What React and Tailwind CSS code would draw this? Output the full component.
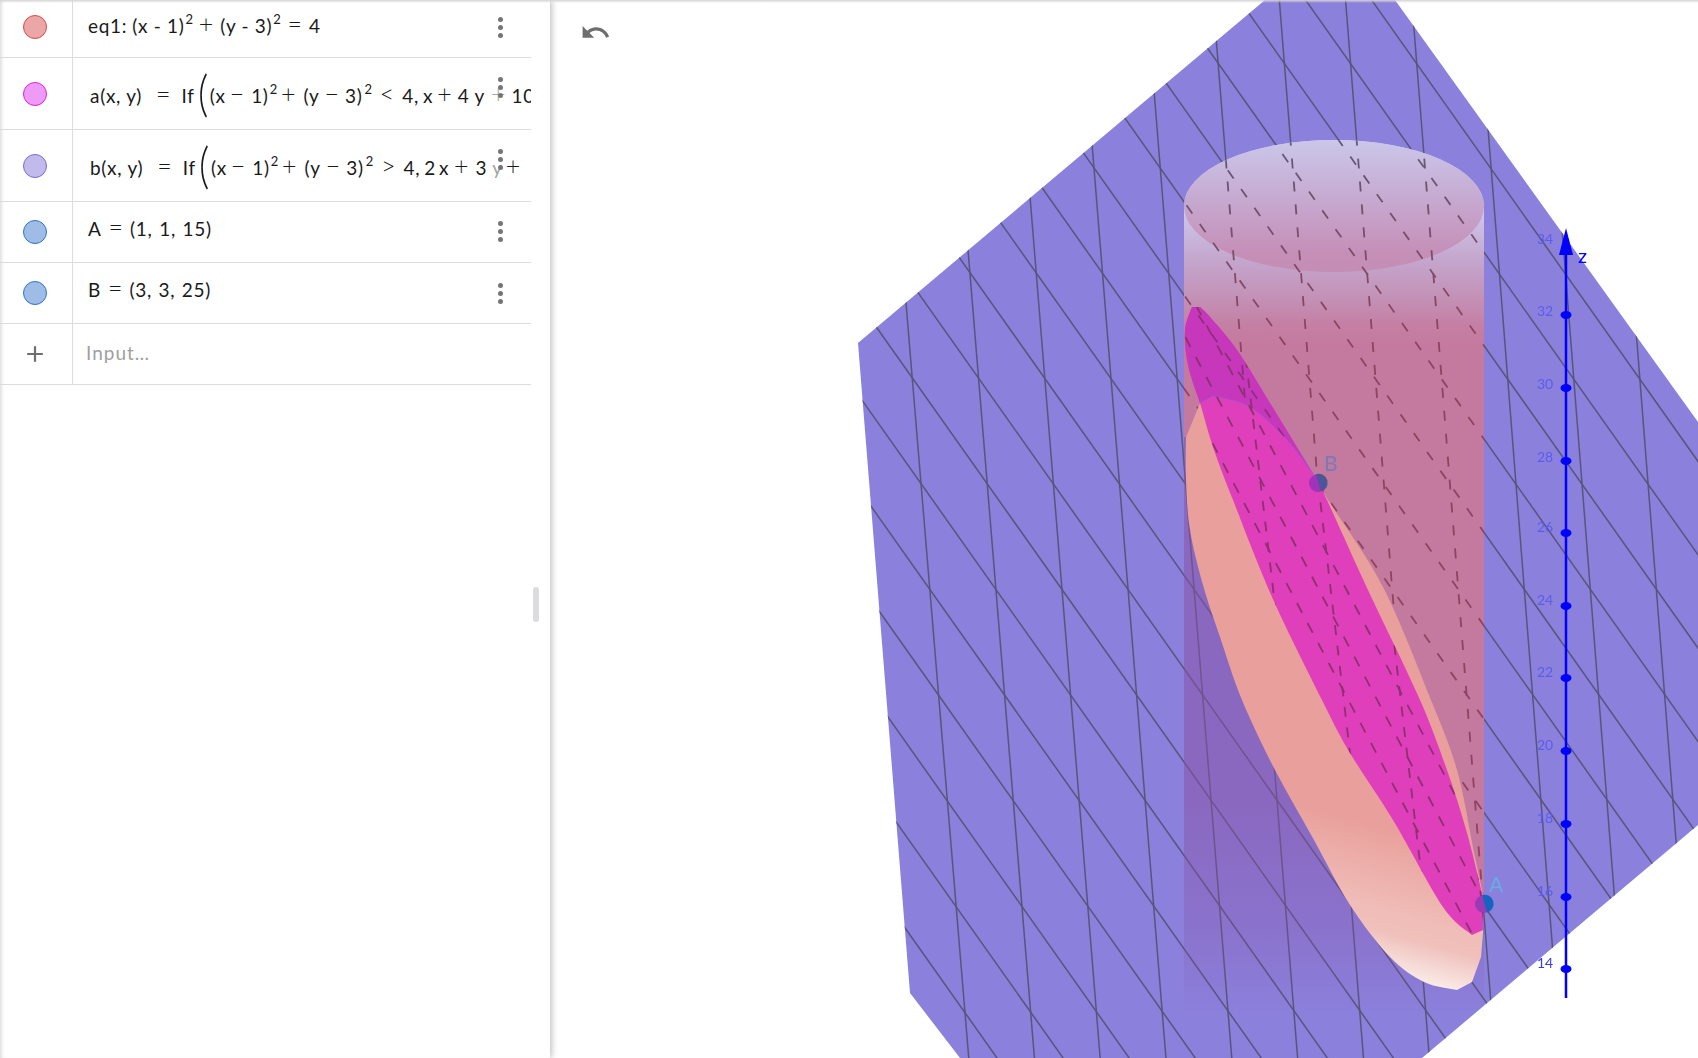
import React from "react";
import { Plus } from "lucide-react";

// plane grid, two families of parallel lines
const f1 = [];
for (let k = -6; k < 14; k++) {
  const px = 906 + 62.1 * k, py = 303 - 52 * k, qx = 939 + 66 * k;
  const s = (qx - px) / (700 - py);
  f1.push([px + s * (-300 - py), -300, px + s * (1100 - py), 1100]);
}
const f2 = [];
for (let j = -26; j < 34; j++) {
  const sx = 877 + 41.3 * j, sy = 328 - 35 * j;
  f2.push([sx - 1054, sy - 1490, sx + 1054, sy + 1490]);
}
const planeGrid = [...f1, ...f2];

// grid of the magenta surface: dash centre, slope dx/dy, dash period
const dashedFrom = (cx, cy, slope, period, dash) => {
  const len = Math.hypot(slope, 1);
  const ux = slope / len, uy = 1 / len;
  const back = period * 30 + dash / 2;
  return [cx - ux * back, cy - uy * back, cx + ux * 700, cy + uy * 700];
};
const f3 = [
  [1218, 508], [1246.7, 508], [1272.3, 501.7], [1304.3, 510],
].map(([x, y]) => dashedFrom(x, y, 0.529, 22.6, 11));
const f4 = [
  [1263.3, 506], [1321, 507.3], [1378, 507], [1435, 507],
].map(([x, y]) => dashedFrom(x, y, 0.118, 20.6, 10));

const ticks = [
  [14, 969], [16, 897], [18, 824], [20, 751], [22, 678], [24, 606],
  [26, 533], [28, 461], [30, 388], [32, 315],
];

// catmull-rom through the points, first point is the current position
const smooth = (p) => {
  let d = "";
  for (let i = 0; i < p.length - 1; i++) {
    const a = p[i - 1] || p[i], b = p[i], c = p[i + 1], e = p[i + 2] || c;
    d += ` C${b[0] + (c[0] - a[0]) / 6} ${b[1] + (c[1] - a[1]) / 6} ${c[0] - (e[0] - b[0]) / 6} ${c[1] - (e[1] - b[1]) / 6} ${c[0]} ${c[1]}`;
  }
  return d;
};

const planePts = "858,343 1265,0 1395,0 1698,422 1698,825 1422,1058 960,1058 910,993";

const pinkPath = "M1184 206 A150 66 0 0 1 1484 206 L1484 905 L1473 847 L1431 700 L1318 483 L1200 403 L1186 437 L1184 437 Z";

const salmonPath =
  "M1186 437 L1200 403 L1213 396 L1318 483" +
  smooth([[1318, 483], [1330, 503], [1383, 587], [1431, 700], [1457, 770], [1473, 847], [1483, 895]]) +
  " L1483 933 L1481 957 L1472 982 L1457 990" +
  smooth([[1457, 990], [1424, 982], [1390, 957], [1350, 905], [1314, 840], [1275, 770], [1242, 700], [1220, 637], [1203, 585], [1190, 530], [1186, 480], [1186, 437]]) +
  " Z";

const magentaPath =
  "M1192 307" +
  smooth([[1192, 307], [1185, 330], [1188, 365], [1200, 403], [1213, 447], [1233, 500], [1272, 597], [1322, 700], [1350, 753], [1393, 820], [1443, 907], [1472, 935]]) +
  " L1483 930 L1483 897" +
  smooth([[1483, 897], [1467, 833], [1448, 773], [1420, 700], [1368, 590], [1327, 500], [1318, 483], [1270, 403], [1237, 350], [1210, 317], [1200, 307]]) +
  " Z";

const magentaDark =
  "M1192 307" +
  smooth([[1192, 307], [1185, 330], [1188, 365], [1200, 403]]) +
  " L1213 396" +
  smooth([[1213, 396], [1250, 407], [1287, 440], [1316, 478]]) +
  smooth([[1316, 478], [1270, 403], [1237, 350], [1210, 317], [1200, 307]]) +
  " Z";

const Lines = ({ data }) =>
  data.map((l, i) => <line key={i} x1={l[0]} y1={l[1]} x2={l[2]} y2={l[3]} />);

function Graph() {
  return (
    <svg viewBox="550 0 1148 1058" className="block w-[1148px] h-[1058px] blur-[0.4px]">
      <defs>
        <clipPath id="plane"><polygon points={planePts} /></clipPath>
        <clipPath id="pink"><path d={pinkPath} /></clipPath>
        <clipPath id="magenta"><path d={magentaPath} /></clipPath>
        <clipPath id="magentaDark"><path d={magentaDark} /></clipPath>
        <linearGradient id="body" gradientUnits="userSpaceOnUse" x1="0" y1="206" x2="0" y2="345">
          <stop offset="0" stopColor="#cfcaee" />
          <stop offset="0.4" stopColor="#c4a5cc" />
          <stop offset="0.68" stopColor="#c48fb4" />
          <stop offset="0.85" stopColor="#c480a4" />
          <stop offset="1" stopColor="#c47a9e" />
        </linearGradient>
        <linearGradient id="disc" gradientUnits="userSpaceOnUse" x1="0" y1="140" x2="0" y2="272">
          <stop offset="0" stopColor="#cbc7ea" />
          <stop offset="0.45" stopColor="#c6a9d0" />
          <stop offset="0.85" stopColor="#c58fb8" />
          <stop offset="1" stopColor="#c48db5" />
        </linearGradient>
        <linearGradient id="dash" gradientUnits="userSpaceOnUse" x1="0" y1="140" x2="0" y2="340">
          <stop offset="0" stopColor="#55506a" />
          <stop offset="1" stopColor="#8a3c5a" />
        </linearGradient>
        <linearGradient id="shade" gradientUnits="userSpaceOnUse" x1="0" y1="800" x2="0" y2="1015">
          <stop offset="0" stopColor="#8950a4" stopOpacity="0.5" />
          <stop offset="0.6" stopColor="#8950a4" stopOpacity="0.28" />
          <stop offset="1" stopColor="#8950a4" stopOpacity="0" />
        </linearGradient>
        <linearGradient id="salmon" gradientUnits="userSpaceOnUse" x1="1400" y1="830" x2="1360" y2="975">
          <stop offset="0" stopColor="#e99f9b" />
          <stop offset="0.55" stopColor="#f0bdb8" />
          <stop offset="0.68" stopColor="#f0c0bb" />
          <stop offset="0.92" stopColor="#f9e8e4" />
        </linearGradient>
      </defs>

      {/* plane with its grid */}
      <polygon points={planePts} fill="#8b80dc" />
      <g clipPath="url(#plane)" stroke="#57557a" strokeWidth="1.5">
        <Lines data={planeGrid} />
      </g>

      {/* cylinder */}
      <rect x="1184" y="300" width="300" height="715" fill="url(#shade)" />
      <path d={pinkPath} fill="url(#body)" />
      <ellipse cx="1334" cy="206" rx="150" ry="66" fill="url(#disc)" />
      <g clipPath="url(#pink)" stroke="url(#dash)" strokeWidth="1.8" strokeDasharray="10 13" opacity="0.9">
        <Lines data={planeGrid} />
      </g>

      {/* surfaces */}
      <path d={salmonPath} fill="url(#salmon)" />
      <path d={magentaPath} fill="#e03fbb" />
      <path d={magentaDark} fill="#c637bc" />
      <path d={"M1200 403 L1213 396" + smooth([[1213, 396], [1250, 407], [1287, 440], [1316, 478]])} fill="none" stroke="#9a5ad0" strokeWidth="1" opacity="0.7" />
      <g clipPath="url(#magentaDark)" stroke="#8f2f7c" strokeWidth="1.8" strokeDasharray="10 13">
        <Lines data={planeGrid} />
      </g>
      <g clipPath="url(#magenta)" stroke="#8f3070" strokeWidth="1.8">
        <g strokeDasharray="11 11.6"><Lines data={f3} /></g>
        <g strokeDasharray="10 10.6"><Lines data={f4} /></g>
      </g>

      {/* points */}
      <circle cx="1318" cy="483" r="9" fill="#a033b8" />
      <path d="M1316 474 A9 9 0 1 1 1321 491.5 Z" fill="#4a5698" />
      <circle cx="1484" cy="904" r="9" fill="#9a3ab5" />
      <path d="M1482 895 A9 9 0 1 1 1487 912.5 Z" fill="#1565c0" />
      <text x="1324" y="471" fontSize="21" fill="#7a7ab4" fontFamily="Lato, sans-serif">B</text>
      <text x="1489" y="892" fontSize="21" fill="#66ace6" fontFamily="Lato, sans-serif">A</text>

      {/* z axis */}
      <line x1="1566" y1="250" x2="1566" y2="998" stroke="#0000ff" strokeWidth="2.5" />
      <path d="M1566 228 L1573 255 L1559 255 Z" fill="#0000ff" />
      {ticks.map(([n, y]) => (
        <g key={n}>
          <ellipse cx="1566" cy={y} rx="5.5" ry="4" fill="#0000ff" />
          <text x="1545" y={n >= 28 ? y + 1 : y - 1} textAnchor="middle" fontSize="14" fill={n === 14 ? "#3a3af0" : "#5a5cf0"} fontFamily="Lato, sans-serif">{n}</text>
        </g>
      ))}
      <text x="1545" y="244" textAnchor="middle" fontSize="14" fill="#5a5cf0" fontFamily="Lato, sans-serif">34</text>
      <text x="1578" y="263" fontSize="20" fill="#0000ff" fontFamily="Lato, sans-serif">z</text>
    </svg>
  );
}

function Dots({ className }) {
  return (
    <div className={`absolute left-[498px] flex flex-col gap-[3px] ${className}`}>
      <span className="w-[5px] h-[5px] rounded-full bg-[#757575]" />
      <span className="w-[5px] h-[5px] rounded-full bg-[#757575]" />
      <span className="w-[5px] h-[5px] rounded-full bg-[#757575]" />
    </div>
  );
}

function Row({ height, marker, children, textClass = "", markerClass = "" }) {
  return (
    <div className={`flex border-b border-[#dcdcdc] ${height}`}>
      <div className={`w-[73px] shrink-0 border-r border-[#dcdcdc] flex items-center justify-center pr-[3px] ${markerClass}`}>
        {marker}
      </div>
      <div className={`flex-1 min-w-0 flex items-center overflow-hidden whitespace-nowrap ${textClass}`}>
        <div className="flex items-baseline">{children}</div>
      </div>
    </div>
  );
}

const Dot = ({ className }) => (
  <span className={`w-6 h-6 rounded-full border ${className}`} />
);

const Two = ({ className = "" }) => (
  <span className={`text-[13px] relative -top-[9px] ${className}`}>2</span>
);

// math operators are wider than the text font's
const Op = ({ className = "", children }) => (
  <span className={`text-[25px] leading-none font-light tracking-normal ${className}`}>{children}</span>
);

const BigParen = () => (
  <span className="w-[12px] ml-[3px] inline-block text-[50px] leading-none font-light tracking-normal relative top-[8px] origin-left scale-x-[0.8]">(</span>
);

const IfHead = ({ name }) => (
  <>
    <span>{name}(x, y)</span>
    <Op className="ml-[14px]">=</Op>
    <span className="ml-[11px]">If</span>
    <BigParen />
    <span>(x</span>
    <Op className="ml-[4px]">−</Op>
    <span className="ml-[7px]">1)</span>
    <Two className="ml-[1px]" />
    <Op className="ml-[3px]">+</Op>
    <span className="ml-[8px]">(y</span>
    <Op className="ml-[5px]">−</Op>
    <span className="ml-[6px]">3)</span>
    <Two className="ml-[2px]" />
  </>
);

export default function App() {
  return (
    <div className="relative flex h-[1058px] w-[1698px] overflow-hidden bg-white font-['Lato',sans-serif] text-[#1a1a1a]">
      <aside className="relative z-10 w-[550px] shrink-0 bg-white shadow-[1px_0_7px_rgba(0,0,0,0.3),inset_4px_0_4px_-3px_rgba(0,0,0,0.18)]">
        <div className="w-[531px] text-[19px] tracking-[0.7px]">
          <Row height="h-[58px]" markerClass="pb-[3px]" marker={<Dot className="bg-[#eba7a7] border-[#d94a4a]" />} textClass="pl-[15px] pb-[6px]">
            <span>eq1:</span>
            <span className="ml-[5px]">(x - 1)</span>
            <Two className="ml-[1px]" />
            <Op className="ml-[5px]">+</Op>
            <span className="ml-[7px]">(y - 3)</span>
            <Two className="ml-[1px]" />
            <Op className="ml-[6px]">=</Op>
            <span className="ml-[7px]">4</span>
          </Row>
          <Row height="h-[72px]" marker={<Dot className="bg-[#ee9bf8] border-[#e020e0]" />} textClass="pl-[17px] pb-[17px]">
            <IfHead name="a" />
            <Op className="ml-[7px]">&lt;</Op>
            <span className="ml-[8px]">4,</span>
            <span className="ml-[4px]">x</span>
            <Op className="ml-[4px]">+</Op>
            <span className="ml-[6px]">4</span>
            <span className="ml-[5px]">y</span>
            <Op className="ml-[6px] text-[#a3a3a3]">+</Op>
            <span className="ml-[6px]">10</span>
          </Row>
          <Row height="h-[72px]" marker={<Dot className="bg-[#c3baec] border-[#7b6ad8]" />} textClass="pl-[17px] pb-[17px]">
            <IfHead name="b" />
            <Op className="ml-[7px]">&gt;</Op>
            <span className="ml-[8px]">4,</span>
            <span className="ml-[4px]">2</span>
            <span className="ml-[3px]">x</span>
            <Op className="ml-[5px]">+</Op>
            <span className="ml-[7px]">3</span>
            <span className="ml-[5px] text-[#a3a3a3]">y</span>
            <Op className="ml-[3px]">+</Op>
          </Row>
          <Row height="h-[61px]" marker={<Dot className="bg-[#9ebce6] border-[#2f74c8]" />} textClass="pl-[15px] pb-[6px]">
            <span>A</span>
            <Op className="ml-[7px]">=</Op>
            <span className="ml-[7px] [word-spacing:1px]">(1, 1, 15)</span>
          </Row>
          <Row height="h-[61px]" marker={<Dot className="bg-[#9ebce6] border-[#2f74c8]" />} textClass="pl-[15px] pb-[6px]">
            <span>B</span>
            <Op className="ml-[7px]">=</Op>
            <span className="ml-[7px] [word-spacing:1px]">(3, 3, 25)</span>
          </Row>
          <Row height="h-[61px]" marker={<Plus className="w-[24px] h-[24px] text-[#6e6e6e]" strokeWidth={2.2} />} textClass="pl-[13px] pb-[2px]">
            <span className="text-[#a0a0a0] tracking-[1px]">Input…</span>
          </Row>
        </div>
        <Dots className="top-[17px]" />
        <Dots className="top-[77px]" />
        <Dots className="top-[149px]" />
        <Dots className="top-[221px]" />
        <Dots className="top-[283px]" />
        <div className="absolute left-[533px] top-[587px] w-[6px] h-[35px] rounded-[3px] bg-[#dcdce0]" />
      </aside>
      <main className="relative flex-1">
        <Graph />
        <svg viewBox="0 0 24 24" className="absolute left-[30px] top-[17px] w-[31px] h-[31px]" fill="#6e6e6e">
          <path d="M12.5 8c-2.65 0-5.05.99-6.9 2.6L2 7v9h9l-3.62-3.62c1.39-1.16 3.16-1.88 5.12-1.88 3.54 0 6.55 2.31 7.6 5.5l2.37-.78C21.08 11.03 17.15 8 12.5 8z" />
        </svg>
      </main>
      <div className="absolute z-20 top-0 inset-x-0 h-[3px] bg-gradient-to-b from-[#d4d4d4] to-transparent" />
    </div>
  );
}
